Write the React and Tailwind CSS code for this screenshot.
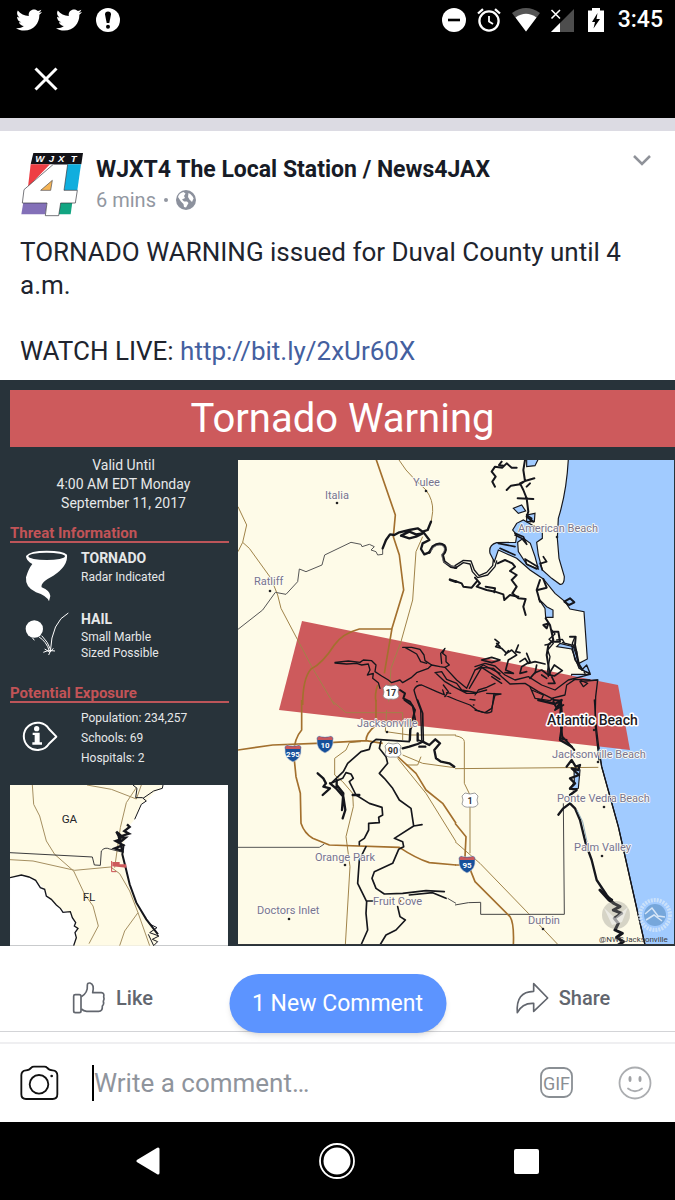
import React from "react";
import { FaTwitter } from "react-icons/fa";

const INK = "#15161c";

function StatusBar() {
  return (
    <div className="flex h-10 items-center justify-between bg-black pl-4 pr-3 text-white">
      <div className="flex items-center gap-[14px]">
        <FaTwitter size={26} aria-label="Twitter" />
        <FaTwitter size={26} aria-label="Twitter" />
        <svg width="24" height="24" viewBox="0 0 24 24" aria-hidden="true">
          <circle cx="12" cy="12" r="12" fill="#fff" />
          <path d="M9 6.500Q9 3.500 12 3.500T15 6.500L13.300 15H10.700Z" />
          <circle cx="12" cy="18.700" r="2" />
        </svg>
      </div>
      <div className="flex items-center gap-[10px]">
        <svg width="24" height="24" viewBox="0 0 24 24" aria-hidden="true">
          <circle cx="12" cy="12" r="12" fill="#fff" />
          <path d="M6 10.700h12v2.600H6z" />
        </svg>
        <svg width="26" height="24" viewBox="-1 0 26 24" fill="none" stroke="#fff" aria-hidden="true">
          <circle cx="12" cy="13" r="9.600" strokeWidth="2.300" />
          <path d="M12 8v5.500l4 2.500" strokeWidth="1.800" />
          <path d="M1 5.500L6 1.200M23 5.500L18 1.200" strokeWidth="2.300" />
        </svg>
        <svg width="28" height="24" viewBox="0 0 28 24" aria-hidden="true">
          <path d="M0 5Q14 -5 28 5L14 23.500Z" fill="#555" />
          <path d="M3.500 9.500Q14 2 24.500 9.500L14 23.500Z" fill="#fff" />
        </svg>
        <svg width="24" height="24" viewBox="0 0 24 24" aria-hidden="true">
          <path d="M24 1V24H1Z" fill="#4d4d4d" />
          <path d="M10 15V24H1Z" fill="#fff" />
          <path d="M1.500 2L10 10.500M10 2L1.500 10.500" stroke="#fff" strokeWidth="1.600" />
        </svg>
        <svg width="24" height="24" viewBox="0 0 24 24" aria-hidden="true">
          <path d="M4 2.500H8V0H16V2.500H20V24H4Z" fill="#fff" />
          <path d="M13.500 5L8 14H11L9.500 20.500L16 11H12.500Z" />
        </svg>
        <span className="text-[23px] font-medium leading-10">3:45</span>
      </div>
    </div>
  );
}

function StationLogo() {
  return (
    <svg className="h-[65px] w-16 shrink-0" viewBox="60 455 192 195" role="img" aria-label="WJXT 4">
      <path d="M100 458H249L244 492H92Z" fill="#131217" />
      <path d="M92 492H150L84 560Z" fill="#ee3e44" />
      <path d="M200 492H243L232 570H192Z" fill="#10aede" />
      <path d="M70 606H141L136 642H64Z" fill="#8370b8" />
      <path d="M180 606H217L212 642H176Z" fill="#12a582" />
      <path d="M160 492H203L192 570H232L226 608H182L176 646H136L141 608H67L72 568Z" fill="#fff" stroke="#33333b" strokeWidth="2" />
      <path d="M122 570L157 540L152 570Z" fill="#f5b455" stroke="#4a4a50" strokeWidth="2" />
      <g fontSize="29" fontWeight="700" fontStyle="italic" fill="#fff" style={{ fontFamily: "Liberation Sans" }}>
        <text x="106" y="485">W</text>
        <text x="146" y="485">J</text>
        <text x="174" y="485">X</text>
        <text x="212" y="485">T</text>
      </g>
    </svg>
  );
}

function PostHeader() {
  return (
    <header className="flex gap-3 pl-5 pr-[22px] pt-[21px]">
      <StationLogo />
      <div className="min-w-0 flex-1 pt-1">
        <h1 className="text-[23px] font-bold leading-7 text-[#171b26]">WJXT4 The Local Station / News4JAX</h1>
        <div className="mt-[2px] flex items-center gap-2 text-[20px] leading-7 text-[#9297a1]">
          <span>6 mins</span>
          <span className="size-1 rounded-full bg-[#9297a1]" />
          <svg width="20" height="20" viewBox="0 0 20 20" role="img" aria-label="Public">
            <circle cx="10" cy="10" r="10" fill="#8c919d" />
            <path d="M2 7Q3 3 7.500 2L9.500 3.500L8 6L9 8L6 9.500L8 11.500H11L12.500 13L10 17.500L8 17L7.500 14L5 11.500Z" fill="#fff" />
            <path d="M12.500 3Q16.500 5 17.500 8.500L16 12L13.500 9.500L12 7Z" fill="#fff" />
          </svg>
        </div>
      </div>
      <button type="button" aria-label="Post options" className="h-5 w-6 text-[#8f9299]">
        <svg width="24" height="20" viewBox="0 0 24 20" fill="none" stroke="currentColor" strokeWidth="2.500">
          <path d="M5 4L13 12L21 4" />
        </svg>
      </button>
    </header>
  );
}

function TornadoIcon() {
  return (
    <svg width="44" height="54" viewBox="75 525 132 162" aria-hidden="true">
      <path d="M78 546Q90 530 140 530T201 542Q205 575 160 605Q120 625 125 640Q150 650 151 666L147 682Q140 665 108 655Q75 640 78 610Q85 585 97 570Q78 560 78 546Z" fill="#fff" />
      <ellipse cx="140" cy="547" rx="55" ry="11" fill="#28333a" />
    </svg>
  );
}

function HailIcon() {
  return (
    <svg width="44" height="46" viewBox="75 715 132 138" fill="none" stroke="#fff" aria-hidden="true">
      <circle cx="103" cy="772" r="26" fill="#fff" stroke="none" />
      <path d="M205 724Q155 750 151 840" strokeWidth="3" />
      <path d="M116 795Q140 810 148 838M125 792Q145 812 151 832M97 798L103 806" strokeWidth="3" />
      <path d="M130 842L146 836L165 838M134 832L150 842L160 830M146 850L151 838" strokeWidth="3" />
    </svg>
  );
}

function InfoIcon() {
  return (
    <svg width="38" height="34" viewBox="64 148 114 102" aria-hidden="true">
      <path d="M148 175L170 198L148 219A41 41 0 1 1 148 175Z" fill="none" stroke="#fff" strokeWidth="6" strokeLinejoin="round" />
      <circle cx="111" cy="174" r="8" fill="#fff" />
      <path d="M99 186H120V215H127V222H98V215H105V193H99Z" fill="#fff" />
    </svg>
  );
}

function RegionMap() {
  return (
    <svg className="block w-full" viewBox="31 342 654 482" role="img" aria-label="Regional locator map">
      <path d="M31 342H685V824H31Z" fill="#fff" />
      <path d="M31 342H490L488 352L466 362L440 390L425 400L405 445L385 470L372 520L375 590L390 645L415 705L455 765L480 800L465 824H222L233 780L228 755L212 728L182 712L150 685L135 655L108 628L65 612L31 620Z" fill="#fffbe6" />
      <g fill="none" stroke="#a58f60" strokeWidth="3">
        <path d="M98 342L102 400L120 435L140 510L165 550L222 600L255 670L280 705L296 765L268 818" />
        <path d="M262 342L335 355L410 384L425 342" />
        <path d="M31 566L100 570L225 598L333 588L360 608L390 660L415 725L375 780L360 824M345 590L362 470L380 395L410 350M415 725L450 824" />
      </g>
      <g fill="none" stroke={INK} strokeWidth="3">
        <path d="M31 545L278 558L284 582L302 583L305 540Q315 527 330 534L366 543" strokeWidth="2.500" />
        <path d="M400 342L412 352L408 380L428 380L440 390L425 400L405 445M430 382L462 360L488 352L490 342" />
        <path d="M31 620L65 612L88 618L108 628L122 650L135 655L140 675L155 685L170 702L182 712L190 724L212 722L218 740L228 755L224 765L235 772L226 785L230 800L222 824" strokeWidth="4" />
        <path d="M382 460L390 468L374 480L388 488L365 495L350 482L362 505L348 510L370 522L345 532L368 540L358 500L378 500L360 515" strokeWidth="7" />
        <path d="M372 520L368 550L378 590L390 640L410 695L440 745L475 790" strokeWidth="6" />
        <path d="M448 758L472 770L450 785L478 795L458 805L474 812L462 824L446 790" />
      </g>
      <path d="M338 573H360V580H380V590L338 586Z" fill="#cd5a5c" />
      <path d="M336 570V602H350" fill="none" stroke="#c9494c" strokeWidth="3" />
      <g fontSize="35" fill="#26262a">
        <text x="186" y="455">GA</text>
        <text x="249" y="691">FL</text>
      </g>
    </svg>
  );
}

function Interstate({ x, y, label }) {
  return (
    <g transform={`translate(${x} ${y})`}>
      <path d="M-8 -4Q-9 -7 -6 -8Q0 -6 6 -8Q9 -7 8 -4Q9 5 0 9Q-9 5 -8 -4Z" fill="#17509a" stroke="#c9ccd4" strokeWidth="0.600" />
      <path d="M-7.500 -4Q-8 -7 -6 -7.500Q0 -5.500 6 -7.500Q8 -7 7.500 -4Z" fill="#c9585c" />
      <text y="4" fontSize="8" fontWeight="700" fill="#fff" textAnchor="middle">{label}</text>
    </g>
  );
}

function UsRoute({ x, y, label }) {
  return (
    <g transform={`translate(${x} ${y})`}>
      <path d="M-5 -7Q0 -5 5 -7L8 -4Q6 0 8 4Q6 8 0 7Q-6 8 -8 4Q-6 0 -8 -4Z" fill="#fff" stroke="#888" strokeWidth="0.800" />
      <text y="4" fontSize="9" fontWeight="700" fill="#333" textAnchor="middle">{label}</text>
    </g>
  );
}

const towns = [
  { name: "Italia", x: 325, y: 499, dot: [337, 503] },
  { name: "Yulee", x: 413, y: 486, dot: [426, 491] },
  { name: "Ratliff", x: 254, y: 585, dot: [270, 591] },
  { name: "American Beach", x: 518, y: 532, dot: [557, 537] },
  { name: "Jacksonville", x: 357, y: 727, dot: [387, 732] },
  { name: "Jacksonville Beach", x: 552, y: 758, dot: [598, 762] },
  { name: "Ponte Vedra Beach", x: 557, y: 802, dot: [604, 807] },
  { name: "Palm Valley", x: 574, y: 851, dot: [602, 856] },
  { name: "Orange Park", x: 315, y: 861, dot: [345, 865] },
  { name: "Doctors Inlet", x: 257, y: 914, dot: [289, 919] },
  { name: "Fruit Cove", x: 373, y: 905, dot: [400, 901] },
  { name: "Durbin", x: 528, y: 924, dot: [543, 929] },
];

function WarningMap() {
  return (
    <svg className="block w-full" viewBox="238 460 436 485" role="img" aria-label="Tornado warning area map">
      <path d="M238 460H674V945H238Z" fill="#fefbe8" />

      {/* Ocean and inlets */}
      <g transform="translate(455 455) scale(.33333)" fill="#a1cbff" stroke={INK} strokeWidth="3.500">
        <path d="M340 12Q335 110 310 190L307 250L312 310L328 365Q328 390 315 388L290 370L262 345L250 300L245 262L262 250L262 225L235 212L205 195L185 205L173 225L185 240L182 262L125 263Q100 270 105 295L118 320L130 285L185 310L225 345L265 372L300 415L330 440L345 462L387 470L397 612L372 625L355 575L315 565L305 575L350 582L372 640L407 658L350 658L345 682L428 675L425 750L432 885L440 935L490 1115L570 1470H680V0H340Z" />
        <path d="M188 262L205 250L226 265L240 305L250 342L215 328L190 290Z" fill="#fefbe8" />
        <path d="M250 430L275 455L294 465V487H272L270 460Z" />
        <path d="M215 12H250L240 32L215 35ZM175 160L200 150L212 168L190 175ZM215 180L240 175L238 200H215Z" />
        <path d="M357 940L375 945L370 1000L345 1003L358 980Z" />
      </g>
      <path d="M302 621L618 685L630 750L279 710Z" fill="#cd5a5c" />

      {/* Roads */}
      <g fill="none" stroke="#a08348" strokeWidth="0.800">
        <g transform="translate(236 455) scale(.33333)" strokeWidth="3">
          <path d="M487 12L510 45L535 72L570 105Q592 135 590 170L585 205M560 245L540 290L530 435L495 560L465 640L458 740" />
          <path d="M6 155L32 210L20 262L6 290M20 262L40 280L105 370L125 420L135 460L230 640L295 750" />
        </g>
        <g transform="translate(236 700) scale(.33333)" strokeWidth="3">
          <path d="M285 0L330 38H500V120M450 95L520 105L660 105M500 165L560 190L655 203M555 170L545 195L510 195" />
          <path d="M375 125L340 128L330 150L296 175V225L320 245L350 280L352 320L330 410L342 500L328 735M452 30L448 95M485 175L570 280L660 425" />
          <path d="M6 442H250L265 432M635 595L660 610" stroke="#555" />
        </g>
        <g transform="translate(455 700) scale(.33333)" strokeWidth="3">
          <path d="M0 107Q28 112 28 125V250L45 285V460M0 206L430 202M0 425L75 490L220 640L310 735" />
          <path d="M325 310L328 643H77V607L40 608L0 615" stroke="#444" />
        </g>
      </g>
      <g fill="none" stroke="#a3702e" strokeLinejoin="round">
        <g transform="translate(236 455) scale(.33333)" strokeWidth="5">
          <path d="M420 12L478 180L472 245L490 300L503 405L468 520L445 655" />
          <path d="M468 522H370Q320 535 295 570Q260 625 225 642Q200 670 200 750M425 690Q415 720 420 740" />
        </g>
        <g transform="translate(236 700) scale(.33333)" strokeWidth="5">
          <path d="M197 0V90Q175 115 173 160L180 230L193 280L195 370Q205 400 230 415L280 435L490 442Q540 475 580 488L660 495" />
          <path d="M6 150L110 135L240 130L390 122L440 130M420 0V75Q390 100 390 122M480 165L540 220L570 270L620 310L660 370" />
        </g>
        <g transform="translate(455 700) scale(.33333)" strokeWidth="5">
          <path d="M0 370L33 410L30 470L60 545L165 650Q178 670 175 735M0 495H30" />
        </g>
      </g>

      {/* Rivers and coast */}
      <g fill="none" stroke={INK} strokeLinejoin="round" strokeLinecap="round">
        <g transform="translate(236 455) scale(.33333)">
          <path d="M6 523L80 465L118 412L150 418L185 380L190 342L210 350L258 330L266 300L345 262L375 268L378 275L400 268L415 275L405 285L420 290L425 300L440 298V280" stroke="#555" strokeWidth="3" />
          <path d="M440 280L450 255L462 238L475 240L490 232L520 225L545 220L560 230L575 225L585 200M495 242L520 230L540 238L560 235L540 245L520 250L495 242M565 235L580 255L560 265L555 282L565 298L580 292" strokeWidth="7" />
          <path d="M580 292L590 275Q610 260 625 272Q635 285 620 300L625 320L645 335L660 338M642 374L660 380" strokeWidth="8" />
          <path d="M585 288L592 277Q610 265 622 274Q630 285 617 300L622 320L645 333L660 336" stroke="#8f8c90" strokeWidth="2" />
        </g>
        <g transform="translate(455 455) scale(.33333)" strokeWidth="4">
          <path d="M0 340L25 323L45 327L52 350L68 368L98 360L120 335L125 318M0 332L25 316L48 318L58 345L72 362L95 352L113 332L115 315" strokeWidth="4" />
          <path d="M128 325L150 315L172 325L180 335L165 348L185 360L170 375L185 395L172 415L190 430L212 432L205 455L212 480" strokeWidth="6" />
          <path d="M0 378L20 385L25 395L50 398L65 380M60 368L75 385L65 395L95 405L120 410L145 418L148 435L165 420L190 425M92 395L120 400L118 412" strokeWidth="6" />
          <path d="M120 95L112 80L122 65L110 50L120 35L142 38L155 25L170 38L185 38M140 20L132 30L145 32M210 15L205 45L210 78L195 85L205 105L215 130L220 170L215 185L235 200M155 105L168 92L195 88L210 78L238 70M188 130L235 132M215 95L225 85" strokeWidth="6" />
          <path d="M180 235L205 245L215 268L200 250L180 240M215 180L230 190L225 200M258 325L275 320L265 305M262 345L255 325M210 312L248 335L245 342L215 328ZM130 265L180 275M135 280L180 300" strokeWidth="5" />
          <path d="M255 375L245 405L255 440M265 372L275 398L248 405M272 490L285 510L295 555L280 570L275 600L285 660M328 440L345 430L358 442L342 450ZM265 510L280 505L275 520ZM290 530H310L315 560H295ZM345 545H362L360 570L372 630" strokeWidth="6" />
        </g>
        <g transform="translate(320 630) scale(.33333)" strokeWidth="4">
          <path d="M45 97L85 93L120 97L130 90L155 92L168 105L165 125L185 138L205 150L215 158L240 150L248 158L275 142L290 128L325 115L335 105M45 99L80 102L110 100L125 105L145 102L150 120L142 135L160 130L158 145L175 158L180 175M248 52L275 52L300 58L312 75L315 92L335 105L360 110L375 112L388 105L378 95V78L368 70L375 55L362 70L365 100M255 52L290 72L302 95L320 100" />
          <path d="M345 128L365 125L380 148L410 160L425 180L470 188L500 180M348 130L375 155L400 170L440 190L470 190M375 112L410 150L440 175L465 120L490 105L540 130M448 175L485 112L540 148" />
          <path d="M305 330L302 240Q285 195 282 180Q288 165 305 165L350 185L410 210L450 225L470 240Q500 255 515 245L522 190M370 165L385 185L375 200L368 180M380 188L392 190M290 155H292M450 208L465 210M460 225H462" />
          <path d="M240 180L255 190L250 205L270 215L285 240L280 260L272 290L270 330" strokeWidth="6" />
        </g>
        <g transform="translate(475 630) scale(.33333)" strokeWidth="4">
          <path d="M0 110L30 100L60 108L90 135L120 150L160 140L200 165L240 180L280 150L345 133M0 120L20 112L55 115L80 140L105 162L150 160L190 185L230 205L270 195L275 165L300 148L345 150" />
          <path d="M20 90L50 82L75 90L50 98ZM60 28L72 38L62 50L80 55L95 70L110 60L125 75L100 90L92 120L115 130L90 128M75 50L65 40M130 45L122 65L135 68M100 62L90 75M135 95L150 85L160 100L180 95L210 102M155 70L165 95L140 110L135 130L155 125M180 130L185 105M165 145L180 128L200 120L220 135L238 105L262 122L238 138L215 132M200 135L215 145M230 140L240 160L220 160" strokeWidth="5" />
          <path d="M230 0L240 12L222 28L235 40L218 60L225 80L218 120L220 140M210 45L225 42M245 30L262 28L270 42M300 20L292 40L305 65L308 95L330 130M262 38L290 45L300 90L320 120L345 130L335 105L320 120" />
          <path d="M50 140L80 160M0 195L10 180L35 172L60 160M0 240L30 248L50 235L60 195L78 192L35 190M165 170L180 205L225 212L235 205M170 180L205 195L200 208M315 150L338 160L325 170L315 155L368 150L362 200L360 280L372 390" />
          <path d="M235 210L258 212L245 235L235 215M258 212L255 270L262 320L285 345L298 360M250 225L240 240L265 225M255 325L275 330" strokeWidth="6" />
        </g>
        <g transform="translate(236 700) scale(.33333)" strokeWidth="5">
          <path d="M505 0L530 18L538 60L522 90L520 125L420 118L405 130L400 148L375 155L335 190L322 215L285 250M545 0L560 40L562 125L545 120M435 122L430 145L450 170L455 190L430 220L445 235L470 265L490 300L525 325L533 378L558 374M533 378L475 415L500 425L503 440L488 448L470 490L415 515L408 535L420 565L445 582L500 580L570 572L625 575" />
          <path d="M285 250L320 235L330 218L345 222L352 235L340 245L360 285L400 310L438 322L440 345L428 352L430 368L398 370V390L385 415L370 425V435M390 440L370 480L365 550L392 605L390 640L395 690L375 735M392 603H412M485 620L492 650L508 660L480 690L450 705L432 735M520 585L590 578L630 595" />
          <path d="M245 220L262 235L270 250L262 260L282 265L260 285M282 250L300 265L322 290L328 330L320 355M302 255L322 280L318 330M302 240V262M350 285H370" strokeWidth="7" />
          <path d="M500 145L520 140L545 132L560 125L580 135L598 118L612 130L595 150L600 175L615 185L640 190L655 200M545 100V122M550 140H568" strokeWidth="7" />
        </g>
        <g transform="translate(455 700) scale(.33333)">
          <path d="M418 0L425 90L432 150L440 200L490 380L570 735" strokeWidth="4" />
          <path d="M250 0L300 12L320 0L310 20M318 10L322 70L315 120L350 140M350 180L335 200M350 180L362 200L375 195L370 210L350 205L372 225L345 235L360 250L345 265L365 270L345 285" strokeWidth="7" />
          <path d="M310 344L325 325L345 310L360 325L375 360L392 430L410 480L425 540L455 585L475 610" strokeWidth="7" />
          <path d="M366 330L383 365L396 425" stroke="#8ba8b8" strokeWidth="3" />
          <path d="M435 570L462 600L480 612L495 620L475 630L500 640L478 655L490 670L480 690L502 700L485 712L505 725L490 735M455 590L470 600" strokeWidth="9" />
        </g>
      </g>

      {/* Agency seals */}
      <g>
        <circle cx="616" cy="915" r="14" fill="#8d8d86" opacity=".35" />
        <path d="M604 908L615 918L628 907L622 922L612 925Z" fill="#fff" opacity=".5" />
        <circle cx="655" cy="915" r="15" fill="none" stroke="#dce9f8" strokeWidth="4" strokeDasharray="2 1" opacity=".7" />
        <circle cx="655" cy="915" r="11" fill="#6c9ed2" opacity=".8" />
        <path d="M645 914L652 908L658 916L665 917M646 920L654 915L662 921" fill="none" stroke="#d7e6f7" strokeWidth="1.500" />
      </g>

      <Interstate x={325} y={744} label="10" />
      <Interstate x={293} y={753} label="295" />
      <Interstate x={467} y={864} label="95" />
      <UsRoute x={391} y={692} label="17" />
      <UsRoute x={393} y={750} label="90" />
      <UsRoute x={470} y={800} label="1" />

      <g fontSize="11" fill="#77748f" stroke="#fffdf2" strokeWidth="1.600" paintOrder="stroke" strokeLinejoin="round">
        {towns.map((t) => (
          <g key={t.name}>
            <circle cx={t.dot[0]} cy={t.dot[1]} r="1.300" fill="#222" stroke="none" />
            <text x={t.x} y={t.y}>{t.name}</text>
          </g>
        ))}
      </g>
      <text x="547" y="725" fontSize="14" fontWeight="500" fill="#1f1b1f" stroke="#fff" strokeWidth="3" paintOrder="stroke" strokeLinejoin="round">Atlantic Beach</text>
      <circle cx="594" cy="730" r="1.200" fill="#222" />
      <text x="599" y="942" fontSize="8" fill="#3c3c40">@NWSJacksonville</text>
      <path d="M238 944.500H674" stroke="#33363a" />
    </svg>
  );
}

function SectionTitle({ children }) {
  return <h3 className="border-b-2 border-[#bd5559] text-[15px] font-bold leading-4 text-[#c25357]">{children}</h3>;
}

function WarningCard() {
  return (
    <section className="bg-[#28333a] pl-[10px] pt-[10px] text-[#e6e8e9]">
      <h2 className="bg-[#cd5a5c] pt-px text-center text-[40px] leading-[56px] text-white">Tornado Warning</h2>
      <div className="flex gap-[9px] pr-px">
        <div className="w-[219px] shrink-0 pt-[9px]">
          <p className="pl-2 text-center text-[14px] leading-[19px]">
            Valid Until<br />4:00 AM EDT Monday<br />September 11, 2017
          </p>
          <div className="mt-3"><SectionTitle>Threat Information</SectionTitle></div>
          <div className="flex h-[61px] gap-3 pl-[15px] pt-[6px]">
            <TornadoIcon />
            <div>
              <h4 className="text-[14px] font-bold leading-[18px]">TORNADO</h4>
              <p className="text-[12px] leading-5">Radar Indicated</p>
            </div>
          </div>
          <div className="flex gap-3 pl-[15px] pt-[6px]">
            <HailIcon />
            <div>
              <h4 className="text-[14px] font-bold leading-[18px]">HAIL</h4>
              <p className="pt-px text-[12px] leading-4">Small Marble<br />Sized Possible</p>
            </div>
          </div>
          <div className="mt-6"><SectionTitle>Potential Exposure</SectionTitle></div>
          <div className="flex gap-[22px] pl-[11px] pt-[5px]">
            <div className="pt-3"><InfoIcon /></div>
            <p className="text-[12px] leading-5">Population: 234,257<br />Schools: 69<br />Hospitals: 2</p>
          </div>
          <div className="mt-[17px] pr-px"><RegionMap /></div>
        </div>
        <div className="min-w-0 flex-1 pt-[13px]"><WarningMap /></div>
      </div>
    </section>
  );
}

function ActionRow() {
  return (
    <div className="relative grid h-[86px] grid-cols-3 border-b border-[#d3d4d7] text-[20px] font-medium text-[#62666e]">
      <button type="button" className="col-start-1 flex items-center justify-center gap-[10px] pb-1 pt-6">
        <svg width="34" height="34" viewBox="214 124 102 100" fill="none" stroke="currentColor" strokeWidth="5" strokeLinejoin="round" aria-hidden="true">
          <path d="M219 168Q219 164 224 164H236Q241 164 241 169V213Q241 218 236 218H224Q219 218 219 213Z" />
          <path d="M242 170Q262 158 260 136Q260 128 268 129Q282 133 276 158H302Q312 159 309 170Q312 178 308 184Q311 192 305 198Q306 214 294 214H258Q249 213 242 207" />
        </svg>
        Like
      </button>
      <button type="button" className="col-start-3 flex items-center justify-center gap-[10px] pb-1 pt-6">
        <svg width="34" height="34" viewBox="538 124 102 100" fill="none" stroke="currentColor" strokeWidth="5" strokeLinejoin="round" aria-hidden="true">
          <path d="M594 131L636 174L594 214V190Q560 188 545 218Q540 155 594 154Z" />
        </svg>
        Share
      </button>
      <button type="button" className="absolute left-1/2 top-7 h-[59px] w-[217px] -translate-x-1/2 rounded-full bg-[#5c94ff] pt-[2px] text-[23px] font-normal text-white shadow-md">
        1 New Comment
      </button>
    </div>
  );
}

function Composer() {
  return (
    <form className="mt-[10px] flex h-20 items-center border-t-2 border-[#efeff1] pl-5 pr-[23px]" onSubmit={(e) => e.preventDefault()}>
      <button type="button" aria-label="Add photo" className="shrink-0">
        <svg width="39" height="36" viewBox="60 372 117 108" fill="none" stroke="#111" strokeWidth="5.500" strokeLinejoin="round" aria-hidden="true">
          <path d="M64 403Q64 389 78 388Q88 388 94 380Q96 377 102 377H133Q139 377 141 380Q147 388 158 388Q172 389 172 403V460Q172 474 158 474H78Q64 474 64 460Z" />
          <circle cx="117" cy="430" r="28" />
          <circle cx="155" cy="405" r="4" fill="#111" stroke="none" />
        </svg>
      </button>
      <span className="ml-[33px] h-9 w-[2px] shrink-0 bg-black" />
      <input type="text" aria-label="Write a comment" placeholder="Write a comment…" className="h-11 min-w-0 flex-1 bg-transparent text-[26px] text-[#171b26] outline-none placeholder:text-[#8f949c]" />
      <button type="button" aria-label="Insert GIF" className="shrink-0">
        <svg width="34" height="32" viewBox="0 0 34 32" aria-hidden="true">
          <rect x="1" y="1" width="31" height="29" rx="8" fill="none" stroke="#8a8f94" strokeWidth="1.800" />
          <text x="16.500" y="22.500" fontSize="18" fill="#8a8f94" textAnchor="middle">GIF</text>
        </svg>
      </button>
      <button type="button" aria-label="Insert emoji" className="ml-11 shrink-0">
        <svg width="34" height="34" viewBox="0 0 34 34" fill="none" stroke="#abadb0" strokeWidth="1.800" aria-hidden="true">
          <circle cx="17" cy="17" r="15.500" />
          <path d="M10 22.500Q17 28 24 22.500" strokeLinecap="round" />
          <ellipse cx="12" cy="13" rx="1.500" ry="3" fill="#a0a2a5" stroke="none" />
          <ellipse cx="22" cy="13" rx="1.500" ry="3" fill="#a0a2a5" stroke="none" />
        </svg>
      </button>
    </form>
  );
}

function NavBar() {
  return (
    <nav className="flex min-h-[79px] flex-1 items-center justify-center gap-[159px] bg-black">
      <button type="button" aria-label="Back">
        <svg width="24" height="28" viewBox="0 0 24 28" aria-hidden="true">
          <path d="M22 2V26L2 14Z" fill="#fff" stroke="#fff" strokeWidth="3" strokeLinejoin="round" />
        </svg>
      </button>
      <button type="button" aria-label="Home">
        <svg width="36" height="36" viewBox="0 0 36 36" aria-hidden="true">
          <circle cx="18" cy="18" r="17" fill="none" stroke="#fff" strokeWidth="1.800" />
          <circle cx="18" cy="18" r="13.500" fill="#fff" />
        </svg>
      </button>
      <button type="button" aria-label="Recent apps" className="size-[25px] rounded-[2px] bg-white" />
    </nav>
  );
}

export default function App() {
  return (
    <div className="flex min-h-screen w-full flex-col bg-white font-[Roboto,sans-serif]">
      <StatusBar />
      <div className="flex h-[78px] items-center bg-black pl-[34px]">
        <button type="button" aria-label="Close">
          <svg width="24" height="24" viewBox="0 0 24 24" fill="none" stroke="#fff" strokeWidth="3" aria-hidden="true">
            <path d="M1.500 1.500L22.500 22.500M22.500 1.500L1.500 22.500" />
          </svg>
        </button>
      </div>
      <div className="h-[13px] bg-[#dcdbe3]" />
      <article>
        <PostHeader />
        <div className="px-5 pb-3 pt-[19px] text-[26px] leading-[33px] text-[#20242e]">
          <p>TORNADO WARNING issued for Duval County until 4 a.m.</p>
          <p className="mt-[33px]">
            WATCH LIVE: <a href="http://bit.ly/2xUr60X" className="text-[#44609f]">http://bit.ly/2xUr60X</a>
          </p>
        </div>
        <WarningCard />
        <ActionRow />
      </article>
      <Composer />
      <NavBar />
    </div>
  );
}
